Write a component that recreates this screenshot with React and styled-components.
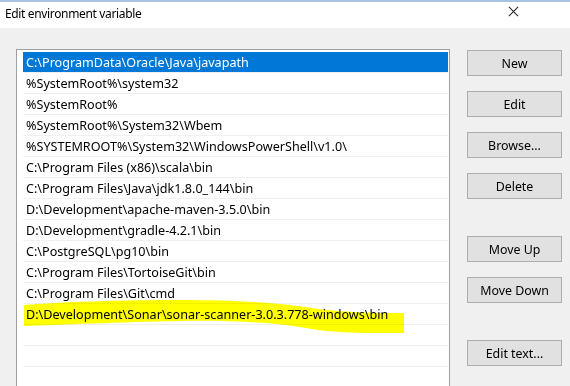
import React from 'react';
import styled, { createGlobalStyle } from 'styled-components';

const paths = [
  'C:\\ProgramData\\Oracle\\Java\\javapath',
  '%SystemRoot%\\system32',
  '%SystemRoot%',
  '%SystemRoot%\\System32\\Wbem',
  '%SYSTEMROOT%\\System32\\WindowsPowerShell\\v1.0\\',
  'C:\\Program Files (x86)\\scala\\bin',
  'C:\\Program Files\\Java\\jdk1.8.0_144\\bin',
  'D:\\Development\\apache-maven-3.5.0\\bin',
  'D:\\Development\\gradle-4.2.1\\bin',
  'C:\\PostgreSQL\\pg10\\bin',
  'C:\\Program Files\\TortoiseGit\\bin',
  'C:\\Program Files\\Git\\cmd',
  'D:\\Development\\Sonar\\sonar-scanner-3.0.3.778-windows\\bin',
  '',
  '',
  '',
];

const buttons = [
  { label: 'New' },
  { label: 'Edit' },
  { label: 'Browse...' },
  { label: 'Delete' },
  { label: 'Move Up', spaced: true },
  { label: 'Move Down' },
  { label: 'Edit text...', spaced: true },
];

const App = () => {
  return (
    <Window>
      <GlobalStyle />
      <TitleBar>
        <Title>Edit environment variable</Title>
        <CloseIcon viewBox="0 0 12 12">
          <path d="M1 1 L11 11 M11 1 L1 11" stroke="#222" strokeWidth="1.1" fill="none" />
        </CloseIcon>
      </TitleBar>
      <Body>
        <PathList>
          {paths.map((p, i) => (
            <PathRow key={i} $selected={i === 0}>
              {p}
            </PathRow>
          ))}
        </PathList>
        <ButtonColumn>
          {buttons.map((b) => (
            <Button key={b.label} $spaced={b.spaced}>
              {b.label}
            </Button>
          ))}
        </ButtonColumn>
      </Body>
      <Highlight viewBox="0 0 570 386">
        <path
          d="M24 305 C 60 302, 120 300, 180 300 C 240 300, 280 303, 318 309 C 350 313, 380 313, 404 313 L 404 333 C 380 333, 350 334, 318 330 C 280 323, 240 320, 180 321 C 120 322, 60 325, 24 326 Z"
          fill="#ffff00"
        />
      </Highlight>
    </Window>
  );
};

const GlobalStyle = createGlobalStyle`
  html, body {
    margin: 0;
    padding: 0;
    background: #f0f0f0;
  }
  body {
    font-family: "Noto Sans", "Open Sans", sans-serif;
    font-size: 12px;
    color: #000;
  }
`;

const Window = styled.div`
  position: relative;
  width: 570px;
  height: 386px;
  overflow: hidden;
  background: #f0f0f0;
`;

const TitleBar = styled.div`
  height: 26px;
  border-top: 2px solid #a9c4e2;
  background: #fff;
  display: flex;
  align-items: center;
  justify-content: space-between;
  padding: 0 51px 0 5px;
`;

const Title = styled.span`
  font-size: 12px;
  letter-spacing: -0.35px;
  margin-top: -3px;
`;

const CloseIcon = styled.svg`
  width: 11px;
  height: 11px;
  margin-top: -8px;
`;

const Body = styled.div`
  display: flex;
  align-items: flex-start;
  gap: 17px;
  padding: 21px 9px 0 16px;
`;

const PathList = styled.div`
  width: 425px;
  height: 400px;
  border: 1px solid #a0a0a0;
  background: #fff;
  padding: 2px 1px 0 6px;
  flex: none;
`;

const PathRow = styled.div`
  height: 20px;
  line-height: 21px;
  padding-left: 3px;
  border-bottom: 1px solid #f0f0f0;
  white-space: nowrap;
  font-size: 12.6px;
  background: ${(p) => (p.$selected ? '#0078d7' : 'transparent')};
  color: ${(p) => (p.$selected ? '#fff' : '#000')};
`;

const ButtonColumn = styled.div`
  display: flex;
  flex-direction: column;
  gap: 15px;
  padding-top: 1px;
`;

const Button = styled.button`
  width: 95px;
  height: 26px;
  margin-top: ${(p) => (p.$spaced ? '22px' : '0')};
  background: #e1e1e1;
  border: 1px solid #adadad;
  border-radius: 0;
  font-family: "Noto Sans", "Open Sans", sans-serif;
  font-size: 12.4px;
  color: #000;
  padding: 0;
`;

const Highlight = styled.svg`
  position: absolute;
  left: 0;
  top: 0;
  width: 570px;
  height: 386px;
  mix-blend-mode: multiply;
  pointer-events: none;
`;

export default App;
